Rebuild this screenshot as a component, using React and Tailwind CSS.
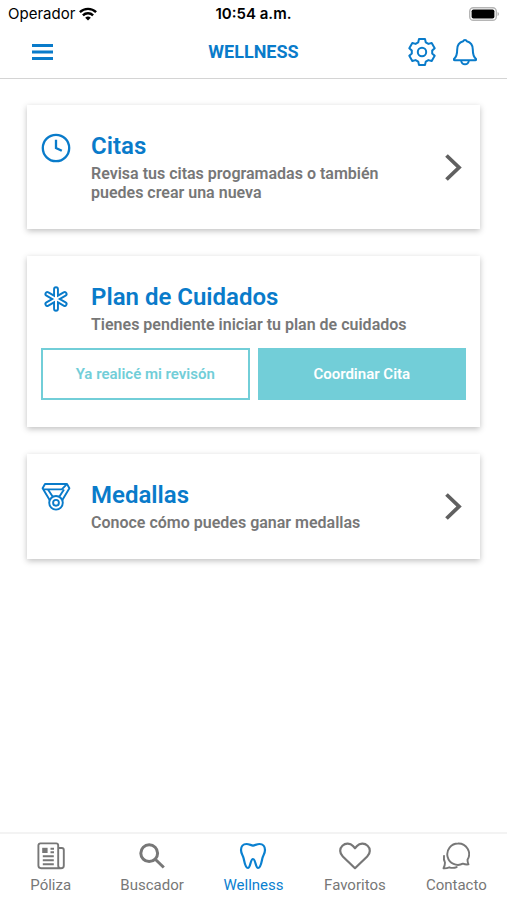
const navItems = [
  { label: 'Póliza', Icon: NewsIcon },
  { label: 'Buscador', Icon: SearchIcon },
  { label: 'Wellness', Icon: ToothIcon, active: true },
  { label: 'Favoritos', Icon: HeartIcon },
  { label: 'Contacto', Icon: ChatIcon },
]

function WifiIcon() {
  return (
    <svg viewBox="0 0 18 14" className="h-[14px] w-[18px]" fill="none" stroke="currentColor" strokeWidth="2.4">
      <path d="M.9 5.2a11.6 11.6 0 0 1 16.2 0" />
      <path d="M3.9 8.4a7.3 7.3 0 0 1 10.2 0" />
      <path d="M9 13.6 6.2 10.8a4 4 0 0 1 5.6 0z" fill="currentColor" stroke="none" />
    </svg>
  )
}

function BatteryIcon() {
  return (
    <svg viewBox="0 0 30 14" className="h-[14px] w-[30px]">
      <rect x="0.7" y="0.7" width="26.6" height="12.6" rx="3.6" fill="#fff" stroke="#b5b5b5" strokeWidth="1.4" />
      <rect x="2.6" y="2.4" width="22.8" height="9.2" rx="1.8" fill="#000" />
      <path d="M28.6 5a2.2 2.2 0 0 1 0 4z" fill="#a5a5a5" />
    </svg>
  )
}

function MenuIcon() {
  return (
    <svg viewBox="0 0 21 16" className="h-4 w-[21px]" stroke="currentColor" strokeWidth="2.8">
      <path d="M0 1.5h21M0 8h21M0 14.5h21" />
    </svg>
  )
}

function GearIcon() {
  return (
    <svg viewBox="0 0 28 28" className="size-7" fill="none" stroke="currentColor" strokeWidth="2" strokeLinejoin="round">
      <path d="M10.2 4.4 11 1.1h6l.8 3.3 2.6 1.5 3.3-.95 3 5.2-2.5 2.35v3l2.5 2.35-3 5.2-3.3-.95-2.6 1.5-.8 3.3h-6l-.8-3.3-2.6-1.5-3.3.95-3-5.2 2.5-2.35v-3l-2.5-2.35 3-5.2 3.3.95z" />
      <circle cx="14" cy="14" r="4.2" />
    </svg>
  )
}

function BellIcon() {
  return (
    <svg viewBox="0 0 24 28" className="h-7 w-6" fill="none" stroke="currentColor" strokeWidth="2" strokeLinejoin="round">
      <path d="M10.2 3.2a1.9 1.9 0 0 1 3.6 0c3.9 1 6 4.1 6 8.3 0 5.7 1 7.5 3 9.3.6.6.3 1.5-.5 1.5H1.7c-.8 0-1.1-.9-.5-1.5 2-1.8 3-3.6 3-9.3 0-4.2 2.1-7.3 6-8.3z" />
      <path d="M8.2 22.5a3.8 3.8 0 0 0 7.6 0" />
    </svg>
  )
}

function ClockIcon() {
  return (
    <svg viewBox="0 0 30 30" className="size-[30px]" fill="none" stroke="currentColor" strokeWidth="2.3">
      <circle cx="15" cy="15" r="13.2" />
      <path d="M15 6.8V15l5.8 2.8" />
    </svg>
  )
}

function AsteriskIcon() {
  return (
    <svg viewBox="0 0 30 30" className="size-[30px]" fill="none" strokeLinecap="round">
      <path d="M15 5.2v19.6M6.4 10l17.2 10M6.4 20l17.2-10" stroke="currentColor" strokeWidth="5.8" />
      <path d="M15 5.2v19.6M6.4 10l17.2 10M6.4 20l17.2-10" stroke="#fff" strokeWidth="2" />
    </svg>
  )
}

function MedalIcon() {
  return (
    <svg viewBox="0 0 30 30" className="size-[30px]" fill="none" stroke="currentColor" strokeWidth="1.9" strokeLinejoin="round">
      <path d="M8.8 18.2 1.6 6.2 4 2h22l2.4 4.2-7.2 12" />
      <path d="M2.4 7.4h18.4l4.6-4.8" />
      <path d="m7 7.6 4.6 7M23 7.6l-4.6 7" />
      <circle cx="15" cy="20.8" r="6.8" />
      <circle cx="15" cy="20.8" r="2.9" />
    </svg>
  )
}

function ChevronIcon() {
  return (
    <svg viewBox="0 0 17 27" className="h-[27px] w-[17px]" fill="none" stroke="#606060" strokeWidth="3.8">
      <path d="M1.5 1.5 14 13.500 1.500 25.500" />
    </svg>
  )
}

function NewsIcon() {
  return (
    <svg viewBox="0 0 28 28" className="size-7" fill="none" stroke="currentColor" strokeWidth="1.9">
      <path d="M24 26.2H4a2.6 2.6 0 0 1-2.6-2.6V3.4a2 2 0 0 1 2-2h15.8a2 2 0 0 1 2 2v20a2.800 2.800 0 0 0 5.600 0V8a2 2 0 0 0-2-2h-3.600" />
      <path d="M5.8 14.3h11M5.8 18.3h11M5.8 22.3h11M13.5 6.7H17M13.5 10.3H17" />
      <path d="M5.2 5.8h5.4V11H5.200z" fill="currentColor" stroke="none" />
    </svg>
  )
}

function SearchIcon() {
  return (
    <svg viewBox="0 0 28 28" className="size-7" fill="none" stroke="currentColor" strokeWidth="3">
      <circle cx="11.2" cy="11.2" r="8.4" />
      <path d="m17 17 8.8 8.5" />
    </svg>
  )
}

function ToothIcon() {
  return (
    <svg viewBox="0 0 28 28" className="size-7" fill="none" stroke="currentColor" strokeWidth="2.2" strokeLinejoin="round">
      <path d="M14 3.6C11.5 3 9.7 2 7.5 2 4 2 2 4.6 2 8c0 3.4 1.9 5.3 2.6 8.2.8 3.2 1.5 9.8 4.3 9.8 2.7 0 2.4-9 5.1-9s2.4 9 5.1 9c2.8 0 3.5-6.6 4.3-9.8C24.1 13.3 26 11.4 26 8c0-3.4-2-6-5.5-6-2.200 0-4 1-6.500 1.600z" />
    </svg>
  )
}

function HeartIcon() {
  return (
    <svg viewBox="0 0 32 28" className="h-7 w-8" fill="none" stroke="currentColor" strokeWidth="2.2" strokeLinejoin="round">
      <path d="M16 26.2 3.8 14.5C.4 11.2.4 6.4 3.4 3.7c3.2-2.9 7.8-2.6 10.6.4l2 2.2 2-2.2c2.8-3 7.4-3.3 10.6-.4 3 2.7 3 7.5-.4 10.8z" />
    </svg>
  )
}

function ChatIcon() {
  return (
    <svg viewBox="0 0 28 28" className="size-7" fill="none" stroke="currentColor" strokeWidth="1.9" strokeLinejoin="round" strokeLinecap="round">
      <path d="M16 1.5a10.7 10.7 0 1 0 4.9 20.2c1.7.7 3.8 1 5.6.7-.8-1.5-1-3-1-4.6A10.7 10.7 0 0 0 16 1.5z" />
      <path d="M2 14c-.4 2.6-.1 4.6 1 6.6 0 2-.5 3.8-1.500 5.700 2.400.2 4-.2 5.800-1 2.500.9 5 .8 7.400-.2" />
    </svg>
  )
}

function Card({ title, text, Icon, arrow, children }) {
  return (
    <section className="bg-white px-[14px] py-[27px] shadow-[0_2px_6px_rgba(0,0,0,0.25)]">
      <div className="flex items-center">
        <div className="flex grow items-start gap-5">
          <div className="shrink-0 pt-px text-[#097bca]">
            <Icon />
          </div>
          <div>
            <h2 className="text-2xl leading-7 font-semibold text-[#097bca]">{title}</h2>
            <p className="mt-1 max-w-80 text-base leading-[19px] font-semibold text-[#777]">{text}</p>
          </div>
        </div>
        {arrow && (
          <button type="button" aria-label={`Abrir ${title}`} className="mr-1 shrink-0">
            <ChevronIcon />
          </button>
        )}
      </div>
      {children}
    </section>
  )
}

export default function App() {
  return (
    <div className="flex min-h-screen flex-col bg-white font-[Roboto,sans-serif]">
      <header className="border-b border-[#d4d4d4]">
        <div className="grid h-7 grid-cols-3 items-center px-2 font-[Inter,sans-serif] text-[15px] text-black">
          <div className="flex items-center gap-1">
            <span>Operador</span>
            <WifiIcon />
          </div>
          <div className="text-center font-semibold">10:54 a.m.</div>
          <div className="flex justify-end">
            <BatteryIcon />
          </div>
        </div>
        <div className="grid h-[50px] grid-cols-3 items-center px-7 pb-0.5 text-[#097bca]">
          <button type="button" aria-label="Menú" className="ml-1 justify-self-start">
            <MenuIcon />
          </button>
          <h1 className="text-center text-lg font-bold">WELLNESS</h1>
          <div className="flex justify-end gap-[17px] pr-0.5">
            <button type="button" aria-label="Ajustes">
              <GearIcon />
            </button>
            <button type="button" aria-label="Notificaciones">
              <BellIcon />
            </button>
          </div>
        </div>
      </header>

      <main className="flex grow flex-col gap-[27px] px-[27px] py-[26px]">
        <Card title="Citas" text="Revisa tus citas programadas o también puedes crear una nueva" Icon={ClockIcon} arrow />
        <Card title="Plan de Cuidados" text="Tienes pendiente iniciar tu plan de cuidados" Icon={AsteriskIcon}>
          <div className="mt-[14px] grid grid-cols-2 gap-2 text-[15px] font-semibold">
            <button type="button" className="h-[52px] border-2 border-[#72ced8] text-[#72ced8]">
              Ya realicé mi revisón
            </button>
            <button type="button" className="h-[52px] bg-[#72ced8] text-white">
              Coordinar Cita
            </button>
          </div>
        </Card>
        <Card title="Medallas" text="Conoce cómo puedes ganar medallas" Icon={MedalIcon} arrow />
      </main>

      <nav className="grid grid-cols-5 border-t-2 border-[#f3f3f3] pt-2 pb-[5px]">
        {navItems.map(({ label, Icon, active }) => (
          <a
            key={label}
            href="#"
            aria-current={active ? 'page' : undefined}
            className={`flex flex-col items-center gap-[5px] text-[15px] leading-5 ${active ? 'text-[#0a80d0]' : 'text-[#777]'}`}
          >
            <Icon />
            <span>{label}</span>
          </a>
        ))}
      </nav>
    </div>
  )
}
